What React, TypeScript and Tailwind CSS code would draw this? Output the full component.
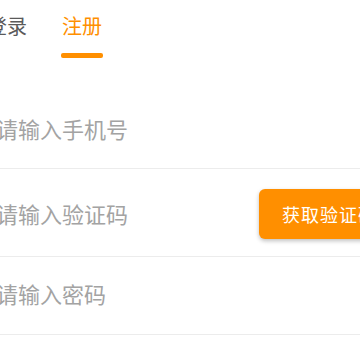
import React from "react";

export default function App() {
  return (
    <div
      className="w-[360px] h-[360px] overflow-hidden bg-white"
      style={{ fontFamily: '"Noto Sans CJK SC", "Noto Sans", sans-serif' }}
    >
      <div className="ml-[-13px] w-[420px]">
        <div className="flex gap-[34px] h-[60px] pt-[15px]">
          <div className="flex flex-col items-center">
            <span className="text-[20px] leading-[22px] text-[#5a5a5a]">登录</span>
          </div>
          <div className="flex flex-col items-center">
            <span className="text-[20px] leading-[22px] text-[#ff8f00]">注册</span>
            <div className="mt-[16px] w-[42px] h-[5px] rounded-[2px] bg-[#ff8f00]" />
          </div>
        </div>
        <div className="ml-[9px] mt-[27px]">
          <div className="flex items-center h-[82px] border-b border-[#ececec]">
            <span className="text-[22px] leading-none text-[#a3a3a3]">请输入手机号</span>
          </div>
          <div className="flex items-center h-[88px] border-b border-[#ececec]">
            <span className="flex-1 text-[22px] leading-none text-[#a3a3a3]">请输入验证码</span>
            <button className="ml-auto mt-[2px] w-[148px] h-[50px] rounded-[6px] bg-[#ff8f00] text-white text-[18px] leading-none tracking-[1px] text-left pl-[23px] shadow-[0_2px_4px_rgba(0,0,0,0.25)]">
              获取验证码
            </button>
          </div>
          <div className="flex items-center h-[78px] pb-[6px] border-b border-[#ececec]">
            <span className="text-[22px] leading-none text-[#a3a3a3]">请输入密码</span>
          </div>
        </div>
      </div>
    </div>
  );
}
